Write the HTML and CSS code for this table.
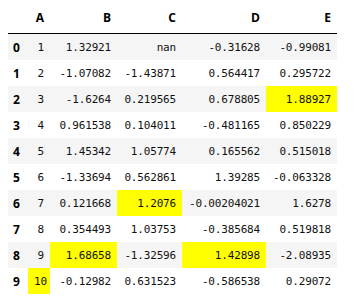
FILE: index.html
```html
<!DOCTYPE html>
<html lang="en">
<head>
    <meta charset="UTF-8">
    <title>DataFrame</title>
    <link rel="stylesheet" href="styles.css">
</head>
<body>

<table class="dataframe">
    <colgroup>
        <col class="col-index">
        <col class="col-a">
        <col class="col-b">
        <col class="col-c">
        <col class="col-d">
        <col class="col-e">
    </colgroup>
    <thead>
        <tr>
            <th></th>
            <th>A</th>
            <th>B</th>
            <th>C</th>
            <th>D</th>
            <th>E</th>
        </tr>
    </thead>
    <tbody>
        <tr><th>0</th><td>1</td><td>1.32921</td><td>nan</td><td>-0.31628</td><td>-0.99081</td></tr>
        <tr><th>1</th><td>2</td><td>-1.07082</td><td>-1.43871</td><td>0.564417</td><td>0.295722</td></tr>
        <tr><th>2</th><td>3</td><td>-1.6264</td><td>0.219565</td><td>0.678805</td><td class="max">1.88927</td></tr>
        <tr><th>3</th><td>4</td><td>0.961538</td><td>0.104011</td><td>-0.481165</td><td>0.850229</td></tr>
        <tr><th>4</th><td>5</td><td>1.45342</td><td>1.05774</td><td>0.165562</td><td>0.515018</td></tr>
        <tr><th>5</th><td>6</td><td>-1.33694</td><td>0.562861</td><td>1.39285</td><td>-0.063328</td></tr>
        <tr><th>6</th><td>7</td><td>0.121668</td><td class="max">1.2076</td><td>-0.00204021</td><td>1.6278</td></tr>
        <tr><th>7</th><td>8</td><td>0.354493</td><td>1.03753</td><td>-0.385684</td><td>0.519818</td></tr>
        <tr><th>8</th><td>9</td><td class="max">1.68658</td><td>-1.32596</td><td class="max">1.42898</td><td>-2.08935</td></tr>
        <tr><th>9</th><td class="max">10</td><td>-0.12982</td><td>0.631523</td><td>-0.586538</td><td>0.29072</td></tr>
    </tbody>
</table>

</body>
</html>
```

FILE: styles.css
```css
body {
    margin: 0;
    padding: 0 8px;
    background-color: #ffffff;
    color: #000000;
    font-family: 'Open Sans', 'Liberation Sans', sans-serif;
}
.dataframe {
    border-collapse: collapse;
    table-layout: fixed;
    width: 329px;
    font-size: 12px;
}
.col-index { width: 20px; }
.col-a { width: 22px; }
.col-b { width: 67px; }
.col-c { width: 65px; }
.col-d { width: 84px; }
.col-e { width: 71px; }
.dataframe th,
.dataframe td {
    padding: 0 6px;
    height: 26px;
    text-align: right;
    vertical-align: middle;
    white-space: nowrap;
    border: none;
}
.dataframe thead th {
    height: 31px;
    border-bottom: 1px solid #000000;
    font-weight: bold;
    padding-top: 2px;
}
.dataframe tbody th {
    text-align: left;
    padding-left: 5px;
    font-weight: bold;
}
.dataframe td {
    font-family: 'DejaVu Sans Mono', 'Liberation Mono', monospace;
    font-size: 11px;
    letter-spacing: -0.17px;
    color: #111111;
}
.dataframe tbody tr:nth-child(odd) {
    background-color: #f5f5f5;
}
.dataframe td.max {
    background-color: #ffff00;
}
```
